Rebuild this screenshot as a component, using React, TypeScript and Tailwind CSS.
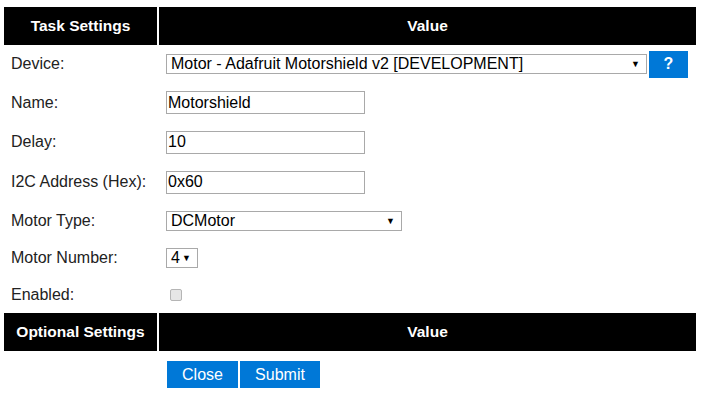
import React from "react";

const FONT = "font-['Liberation_Sans',Arial,sans-serif]";

function Header({ left }: { left: string }) {
  return (
    <div className="flex h-[38px] gap-[2px]">
      <div className="flex w-[153px] items-center justify-center bg-black text-[15.5px] font-bold text-white">
        {left}
      </div>
      <div className="flex flex-1 items-center justify-center bg-black text-[15.5px] font-bold text-white">
        Value
      </div>
    </div>
  );
}

function Row({ label, h, children }: { label: string; h: string; children?: React.ReactNode }) {
  return (
    <div className={`flex items-center ${h}`}>
      <div className="w-[162px] pl-[7px] text-[16px] text-[#222]">{label}</div>
      <div className="flex flex-1 items-center">{children}</div>
    </div>
  );
}

function FakeSelect({ value, w }: { value: string; w: string }) {
  return (
    <div className={`flex h-[20px] items-center justify-between border border-[#a9a9a9] bg-white pl-[4px] pr-[6px] text-[16px] text-black ${w}`}>
      <span>{value}</span>
      <span className="text-[9px] leading-none">▼</span>
    </div>
  );
}

function TextBox({ value }: { value: string }) {
  return (
    <input
      readOnly
      value={value}
      className="h-[23px] w-[199px] border border-[#a9a9a9] bg-white px-[1px] text-[16px] text-black outline-none"
    />
  );
}

export default function App() {
  return (
    <div className={`h-[398px] w-[704px] bg-white ${FONT}`}>
      <div className="ml-[4px] w-[692px] pt-[7px]">
        <Header left="Task Settings" />
        <Row label="Device:" h="h-[38px]">
          <FakeSelect value="Motor - Adafruit Motorshield v2 [DEVELOPMENT]" w="w-[481px]" />
          <button className="ml-[2px] flex h-[27px] w-[39px] items-center justify-center bg-[#0078d7] text-[16px] font-bold text-white">
            ?
          </button>
        </Row>
        <Row label="Name:" h="h-[39px]">
          <TextBox value="Motorshield" />
        </Row>
        <Row label="Delay:" h="h-[40px]">
          <TextBox value="10" />
        </Row>
        <Row label="I2C Address (Hex):" h="h-[40px]">
          <TextBox value="0x60" />
        </Row>
        <Row label="Motor Type:" h="h-[38px]">
          <FakeSelect value="DCMotor" w="w-[236px]" />
        </Row>
        <Row label="Motor Number:" h="h-[36px]">
          <FakeSelect value="4" w="w-[32px]" />
        </Row>
        <Row label="Enabled:" h="h-[37px]">
          <div className="ml-[4px] h-[12px] w-[12px] rounded-[2px] border border-[#b5b5b5] bg-[#e6e6e6]" />
        </Row>
        <Header left="Optional Settings" />
        <div className="flex gap-[2px] pl-[163px] pt-[10px]">
          <button className="h-[27px] w-[71px] bg-[#0078d7] text-[16px] text-white">Close</button>
          <button className="h-[27px] w-[80px] bg-[#0078d7] text-[16px] text-white">Submit</button>
        </div>
      </div>
    </div>
  );
}
